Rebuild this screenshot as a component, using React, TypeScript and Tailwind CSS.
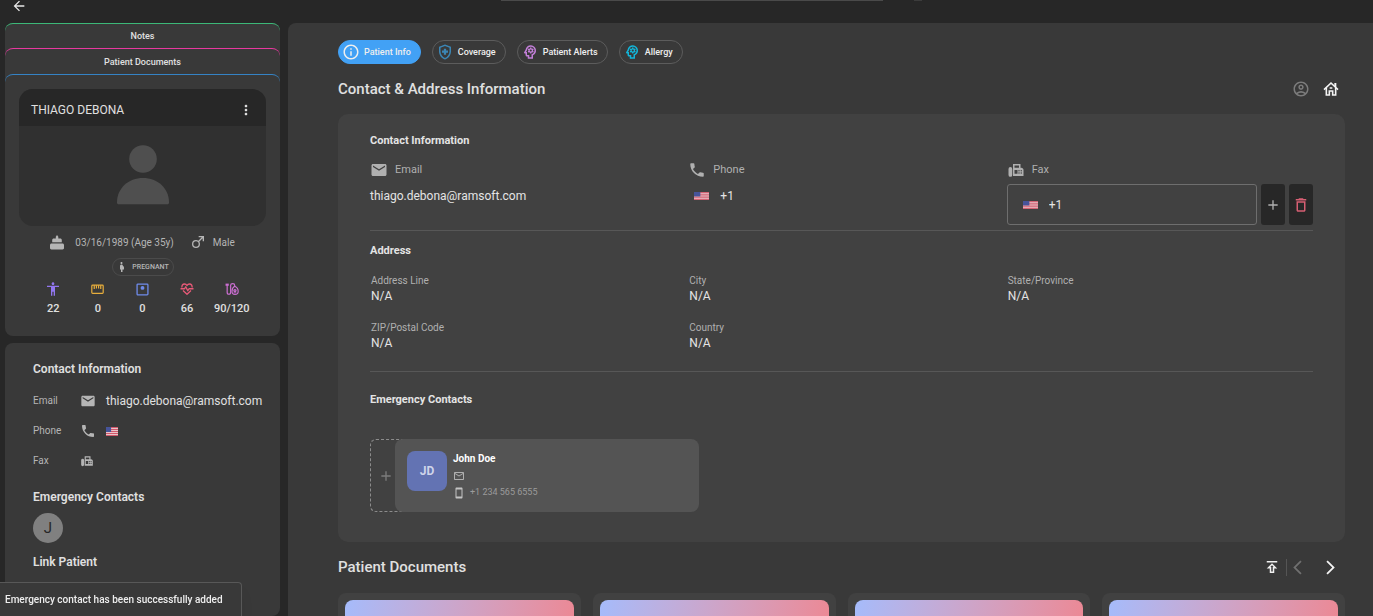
import type { ComponentType, ReactNode } from "react";
import {
  MdAccessibility,
  MdAdd,
  MdArrowBack,
  MdArrowBackIosNew,
  MdArrowForwardIos,
  MdDeleteOutline,
  MdEmail,
  MdFax,
  MdInfoOutline,
  MdMoreVert,
  MdOutlineAccountCircle,
  MdOutlineHealthAndSafety,
  MdOutlineMail,
  MdOutlinePsychology,
  MdOutlinePublish,
  MdPhone,
  MdPregnantWoman,
  MdSmartphone,
} from "react-icons/md";

type IconProps = { className?: string };

function Flag({ className = "" }: IconProps) {
  return (
    <svg viewBox="0 0 26 18" preserveAspectRatio="none" className={className} aria-hidden="true">
      <rect width="26" height="18" fill="#e9c3c9" />
      {[0, 4, 8, 12, 16].map((y) => (
        <rect key={y} y={y} width="26" height="2" fill="#d0586a" />
      ))}
      <rect width="11" height="10" fill="#46549a" />
    </svg>
  );
}

function MaleIcon({ className }: IconProps) {
  return (
    <svg viewBox="0 0 24 24" fill="currentColor" className={className} aria-hidden="true">
      <path d="M9 9c1.29 0 2.5.41 3.47 1.11L17.58 5H13V3h8v8h-2V6.41l-5.11 5.09c.7 1 1.11 2.2 1.11 3.5a6 6 0 1 1-6-6m0 2a4 4 0 1 0 0 8 4 4 0 0 0 0-8z" />
    </svg>
  );
}

function CakeIcon({ className }: IconProps) {
  return (
    <svg viewBox="0 0 14 15" fill="currentColor" className={className} aria-hidden="true">
      <path d="M7 0l1.3 1.8v1.7h1.9c1 0 1.6.6 1.6 1.6v2H2.2v-2c0-1 .6-1.6 1.6-1.6h2V1.8z" />
      <rect x="2.2" y="7.1" width="9.6" height="1" opacity=".35" />
      <path d="M1.6 8.6h10.8c1 0 1.6.6 1.6 1.5v3c0 .9-.5 1.4-1.4 1.4H1.4C.5 14.5 0 14 0 13.1v-3c0-.9.6-1.5 1.6-1.5z" />
    </svg>
  );
}

function RulerIcon({ className }: IconProps) {
  return (
    <svg viewBox="0 0 24 24" fill="none" stroke="currentColor" strokeWidth="2.2" className={className} aria-hidden="true">
      <rect x="1.5" y="4" width="21" height="15" rx="1.5" />
      <path d="M6 4v7M10 4v6M14 4v6M18 4v7" />
    </svg>
  );
}

function ScaleIcon({ className }: IconProps) {
  return (
    <svg viewBox="0 0 24 24" fill="none" stroke="currentColor" strokeWidth="2.4" className={className} aria-hidden="true">
      <rect x="2" y="2" width="20" height="20" rx="1.5" />
      <circle cx="12" cy="9" r="3.6" fill="currentColor" stroke="none" />
    </svg>
  );
}

function HeartIcon({ className }: IconProps) {
  return (
    <svg viewBox="0 0 28 24" fill="none" stroke="currentColor" strokeWidth="2.6" strokeLinejoin="round" className={className} aria-hidden="true">
      <path d="M4 9c-1-4 1.5-7 5-7 2.2 0 4 1.2 5 3 1-1.8 2.8-3 5-3 3.5 0 6 3 5 7" />
      <path d="M1 11.5h8l2.5-4 4 8 2.5-4h9" />
      <path d="M6 15l8 7.5 8-7.5" />
    </svg>
  );
}

function PressureIcon({ className }: IconProps) {
  return (
    <svg viewBox="0 0 26 24" fill="none" stroke="currentColor" strokeWidth="2.2" className={className} aria-hidden="true">
      <path d="M1 4h6" strokeWidth="4" />
      <path d="M4 4v14c0 5 6.5 5 6.5 0V5c0-4 7.5-4 7.5 0v3" />
      <path d="M18 7c-3.5 2-5 5-5 9 0 3.5 2 6 5.5 6s6-2.5 6-6c0-4-2.5-7-6.5-9z" />
      <circle cx="18.5" cy="15" r="2" />
      <path d="M16 19h5" strokeWidth="1.5" />
    </svg>
  );
}

function HouseIcon({ className }: IconProps) {
  return (
    <svg viewBox="0 0 24 24" fill="none" stroke="currentColor" strokeWidth="2.4" className={className} aria-hidden="true">
      <path d="M1.5 13L12 3l10.5 10" />
      <path d="M18.5 9V3" strokeWidth="3" />
      <path d="M5 10.5v10.5h4.500v-6h5v6H19V10.500" />
      <path d="M10 10.5h4" />
    </svg>
  );
}

function Avatar() {
  return (
    <svg viewBox="0 0 52 60" fill="#4f4f4f" className="h-15 w-13" aria-hidden="true">
      <circle cx="26" cy="14" r="13.8" />
      <path d="M0 57.5C0 43 11.6 33 26 33s26 10 26 24.5c0 1.2-.6 1.8-1.8 1.8H1.8C.6 59.3 0 58.7 0 57.5z" />
    </svg>
  );
}

const vitals: { label: string; icon: ComponentType<IconProps>; size: string; color: string; value: string }[] = [
  { label: "BMI", icon: MdAccessibility, size: "size-4", color: "text-[#9277f0]", value: "22" },
  { label: "Height", icon: RulerIcon, size: "size-[13px]", color: "text-[#e8ae3c]", value: "0" },
  { label: "Weight", icon: ScaleIcon, size: "size-[13px]", color: "text-[#6f8bea]", value: "0" },
  { label: "Heart rate", icon: HeartIcon, size: "size-[14px]", color: "text-[#e85a78]", value: "66" },
  { label: "Blood pressure", icon: PressureIcon, size: "size-[14px]", color: "text-[#cc6fd2]", value: "90/120" },
];

function Sidebar() {
  return (
    <aside className="flex w-[275px] shrink-0 flex-col gap-[7px] text-[#e0e0e0]">
      <section className="rounded-lg bg-[#393939] pb-[19px]">
        <button className="flex h-[25px] w-full items-center justify-center rounded-t-lg border-t border-[#3cb878] pt-[2px] text-[9px] font-medium">
          Notes
        </button>
        <button className="flex h-[26px] w-full items-center justify-center rounded-t-lg border-t border-[#e8399f] pt-[2px] text-[9px] font-medium">
          Patient Documents
        </button>
        <div className="rounded-t-lg border-t border-[#3583c5] px-[14px] pt-[14px]">
          <div className="overflow-hidden rounded-[14px] bg-[#303030]">
            <div className="flex h-[37px] items-center justify-between bg-[#272727] px-3">
              <h1 className="pt-1 text-[12px] leading-4">THIAGO DEBONA</h1>
              <button aria-label="More options" className="pt-1">
                <MdMoreVert className="size-4" />
              </button>
            </div>
            <div className="flex h-[100px] items-start justify-center pt-[19px]">
              <Avatar />
            </div>
          </div>
        </div>
        <div className="mt-2 flex h-4 items-center justify-center text-[10px] text-[#b5b5b5]">
          <CakeIcon className="mr-[11px] h-[15px] w-[14px]" />
          <span>03/16/1989 (Age 35y)</span>
          <MaleIcon className="mr-[7px] ml-4 size-4" />
          <span>Male</span>
        </div>
        <div className="mx-auto mt-2 flex h-[18px] w-[62px] items-center justify-center gap-1 rounded-full border border-[#4b4b4b] text-[7px] font-medium text-[#b5b5b5]">
          <MdPregnantWoman className="size-3" />
          PREGNANT
        </div>
        <ul className="mx-[26px] mt-[5px] grid grid-cols-5">
          {vitals.map(({ label, icon: Icon, size, color, value }) => (
            <li key={label} aria-label={label} className="flex flex-col items-center">
              <span className="flex h-4 items-center">
                <Icon className={`${size} ${color}`} />
              </span>
              <span className="mt-1 text-[11px] leading-4 font-medium">{value}</span>
            </li>
          ))}
        </ul>
      </section>

      <section className="h-[273px] shrink-0 rounded-lg bg-[#393939] pt-[18px] pl-7">
        <h2 className="text-[12px] leading-4 font-semibold">Contact Information</h2>
        <dl className="mt-4 flex flex-col gap-[14px] text-[10px] leading-4">
          <div className="flex items-center">
            <dt className="w-[47px] text-[#b5b5b5]">Email</dt>
            <MdEmail className="mr-[10px] size-4 text-[#b5b5b5]" />
            <dd className="text-[12px]">thiago.debona@ramsoft.com</dd>
          </div>
          <div className="flex items-center">
            <dt className="w-[47px] text-[#b5b5b5]">Phone</dt>
            <MdPhone className="mr-[10px] size-4 text-[#b5b5b5]" />
            <dd>
              <Flag className="h-[9px] w-3" />
            </dd>
          </div>
          <div className="flex items-center">
            <dt className="w-[47px] text-[#b5b5b5]">Fax</dt>
            <MdFax className="size-[14px] text-[#b5b5b5]" />
          </div>
        </dl>
        <h2 className="mt-5 text-[12px] leading-4 font-semibold">Emergency Contacts</h2>
        <div className="mt-2 flex size-[30px] items-center justify-center rounded-full bg-[#808080] text-[15px] text-[#272727]">J</div>
        <h2 className="mt-[11px] text-[12px] leading-4 font-semibold">Link Patient</h2>
      </section>
    </aside>
  );
}

function Chip({ icon, active = false, children }: { icon: ReactNode; active?: boolean; children: ReactNode }) {
  return (
    <button
      className={`flex h-6 items-center gap-1 rounded-full border pr-[9px] pl-[3px] text-[9px] font-medium text-[#eeeeee] ${
        active ? "border-[#42a1f5] bg-[#42a1f5]" : "border-[#5c5c5c]"
      }`}
    >
      {icon}
      <span className="pt-px">{children}</span>
    </button>
  );
}

function Field({ label, children }: { label: string; children: ReactNode }) {
  return (
    <div className="pl-px">
      <dt className="text-[10px] leading-[14px] text-[#b0b0b0]">{label}</dt>
      <dd className="text-[12px] leading-4 text-[#e4e4e4]">{children}</dd>
    </div>
  );
}

function ContactCard() {
  return (
    <section className="mt-4 rounded-[10px] bg-[#414141] px-8 pt-[19px] pb-[30px] text-[#e4e4e4]">
      <h3 className="text-[11px] leading-4 font-bold">Contact Information</h3>
      <div className="mt-[11px] grid h-[70px] grid-cols-3 gap-x-3">
        <div>
          <div className="flex h-5 items-center gap-[7px] text-[11px] text-[#b0b0b0]">
            <MdEmail className="size-[18px]" />
            Email
          </div>
          <p className="mt-2 text-[12px] leading-4">thiago.debona@ramsoft.com</p>
        </div>
        <div>
          <div className="flex h-5 items-center gap-[7px] text-[11px] text-[#b0b0b0]">
            <MdPhone className="size-[18px]" />
            Phone
          </div>
          <p className="mt-2 flex items-center gap-[11px] pl-[6px] text-[12px] leading-4">
            <Flag className="h-2 w-[15px]" />
            +1
          </p>
        </div>
        <div>
          <label htmlFor="fax" className="flex h-5 items-center gap-[7px] text-[11px] text-[#b0b0b0]">
            <MdFax className="size-[18px]" />
            Fax
          </label>
          <div className="mt-1 flex h-[41px] gap-1">
            <div className="flex min-w-0 flex-1 items-center gap-[11px] rounded-[3px] border border-[#6e6e6e] pl-[15px]">
              <Flag className="h-2 w-[15px] shrink-0" />
              <input id="fax" defaultValue="+1" className="w-full min-w-0 bg-transparent text-[12px] outline-none" />
            </div>
            <button aria-label="Add fax" className="flex w-6 items-center justify-center rounded-[3px] bg-[#272727] text-[#b0b0b0]">
              <MdAdd className="size-4" />
            </button>
            <button aria-label="Delete fax" className="flex w-6 items-center justify-center rounded-[3px] bg-[#272727] text-[#d65f73]">
              <MdDeleteOutline className="size-[18px]" />
            </button>
          </div>
        </div>
      </div>

      <div className="border-t border-[#575757] pt-3">
        <h3 className="text-[11px] leading-4 font-bold">Address</h3>
        <dl className="mt-[15px] grid grid-cols-3 gap-x-3 gap-y-[17px]">
          <Field label="Address Line">N/A</Field>
          <Field label="City">N/A</Field>
          <Field label="State/Province">N/A</Field>
          <Field label="ZIP/Postal Code">N/A</Field>
          <Field label="Country">N/A</Field>
        </dl>
      </div>

      <div className="mt-5 border-t border-[#575757] pt-5">
        <h3 className="text-[11px] leading-4 font-bold">Emergency Contacts</h3>
        <div className="mt-[31px] flex h-[73px]">
          <button
            aria-label="Add emergency contact"
            className="-mr-2 flex w-[33px] items-center rounded-l-md border border-r-0 border-dashed border-[#8c8c8c] pl-[7px] text-[#7c7c7c]"
          >
            <MdAdd className="size-4" />
          </button>
          <article className="relative flex w-[304px] gap-[6px] rounded-lg bg-[#545454] p-3">
            <div className="flex size-10 items-center justify-center rounded-lg bg-[#6373b3] text-[12px] font-bold text-[#cfd5ea]">JD</div>
            <div className="text-[9px] text-[#9b9b9b]">
              <h4 className="text-[10px] leading-4 font-bold text-white">John Doe</h4>
              <p className="flex h-[17px] items-center">
                <MdOutlineMail className="size-3 text-[#b0b0b0]" />
              </p>
              <p className="flex h-[17px] items-center gap-[5px]">
                <MdSmartphone className="size-3 text-[#c4c4c4]" />
                +1 234 565 6555
              </p>
            </div>
          </article>
        </div>
      </div>
    </section>
  );
}

function DocumentsSection() {
  return (
    <section className="mt-4">
      <div className="flex h-[18px] items-center justify-between">
        <h2 className="text-[15px] leading-[18px] font-medium">Patient Documents</h2>
        <div className="flex items-center">
          <button aria-label="Upload document">
            <MdOutlinePublish className="size-[18px] text-[#f0f0f0]" />
          </button>
          <span className="ml-[5px] h-[17px] w-px bg-[#555555]" />
          <button aria-label="Previous documents" className="ml-[2px]">
            <MdArrowBackIosNew className="size-[17px] text-[#707070]" />
          </button>
          <button aria-label="Next documents" className="mr-[6px] ml-4">
            <MdArrowForwardIos className="size-[17px] text-[#f4f4f4]" />
          </button>
        </div>
      </div>
      <div className="mt-[17px] grid grid-cols-4 gap-3">
        {["first", "second", "third", "fourth"].map((id) => (
          <article key={id} className="rounded-lg bg-[#414141] p-[7px]">
            <div className="h-32 rounded-t-lg bg-linear-100 from-[#a5bbfb] to-[#f0838c]" />
          </article>
        ))}
      </div>
    </section>
  );
}

export default function App() {
  return (
    <div className="flex h-screen flex-col overflow-hidden bg-[#272727] font-['Roboto',sans-serif]">
      <header className="flex h-[23px] shrink-0 items-start">
        <button aria-label="Go back" className="-mt-[2px] ml-[11px] text-[#e8e8e8]">
          <MdArrowBack className="size-4" />
        </button>
        <div className="flex flex-1 justify-center gap-[31px] pl-[22px]">
          <span className="h-px w-[382px] bg-[#4a4a4a]" />
          <span className="h-px w-2 bg-[#3c3c3c]" />
        </div>
      </header>
      <div className="flex min-h-0 flex-1 gap-2 pl-[5px]">
        <Sidebar />
        <main className="min-w-0 flex-1 overflow-hidden rounded-tl-lg bg-[#393939] pt-[17px] pr-7 pl-[50px] text-[#e0e0e0]">
          <nav aria-label="Patient sections" className="flex gap-[11px]">
            <Chip active icon={<MdInfoOutline className="size-[18px]" />}>
              Patient Info
            </Chip>
            <Chip icon={<MdOutlineHealthAndSafety className="size-[18px] text-[#3b86b5]" />}>Coverage</Chip>
            <Chip icon={<MdOutlinePsychology className="size-[18px] text-[#c27fd8]" />}>Patient Alerts</Chip>
            <Chip icon={<MdOutlinePsychology className="size-[18px] text-[#12b5d9]" />}>Allergy</Chip>
          </nav>
          <div className="mt-4 flex h-[18px] items-center justify-between">
            <h2 className="text-[15px] leading-[18px] font-medium">Contact &amp; Address Information</h2>
            <div className="flex items-center gap-[13px] pr-[6px]">
              <button aria-label="Profile">
                <MdOutlineAccountCircle className="size-[18px] text-[#7c7c7c]" />
              </button>
              <button aria-label="Home address">
                <HouseIcon className="size-4 text-[#f4f4f4]" />
              </button>
            </div>
          </div>
          <ContactCard />
          <DocumentsSection />
        </main>
      </div>
      <div
        role="status"
        className="fixed bottom-0 left-0 flex h-[34px] items-center rounded-tr-sm border-t border-r border-[#585858] bg-[#393939] pr-[18px] pl-[5px] text-[10px] font-medium text-[#eeeeee] shadow-lg"
      >
        Emergency contact has been successfully added
      </div>
    </div>
  );
}
